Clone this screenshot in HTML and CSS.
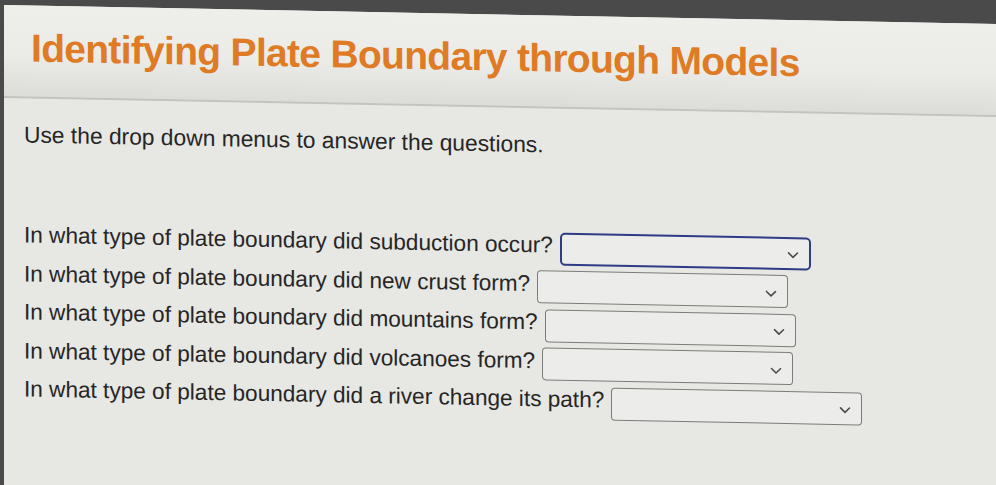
FILE: index.html
```html
<!DOCTYPE html>
<html lang="en">
<head>
<meta charset="utf-8">
<title>Identifying Plate Boundary through Models</title>
<link rel="stylesheet" href="styles.css">
</head>
<body>
<div class="sheet">
  <header class="banner">
    <h1 class="title">Identifying Plate Boundary through Models</h1>
  </header>
  <main class="content">
    <p class="lead">Use the drop down menus to answer the questions.</p>
    <ul class="questions">
      <li class="question">
        <span class="prompt">In what type of plate boundary did subduction occur?</span>
        <div class="dropdown is-focused" tabindex="0">
          <svg class="chevron" viewBox="0 0 12 8" aria-hidden="true"><path d="M1.5 1.8 6 6.2 10.5 1.8"/></svg>
        </div>
      </li>
      <li class="question">
        <span class="prompt">In what type of plate boundary did new crust form?</span>
        <div class="dropdown" tabindex="0">
          <svg class="chevron" viewBox="0 0 12 8" aria-hidden="true"><path d="M1.5 1.8 6 6.2 10.5 1.8"/></svg>
        </div>
      </li>
      <li class="question">
        <span class="prompt">In what type of plate boundary did mountains form?</span>
        <div class="dropdown" tabindex="0">
          <svg class="chevron" viewBox="0 0 12 8" aria-hidden="true"><path d="M1.5 1.8 6 6.2 10.5 1.8"/></svg>
        </div>
      </li>
      <li class="question">
        <span class="prompt">In what type of plate boundary did volcanoes form?</span>
        <div class="dropdown" tabindex="0">
          <svg class="chevron" viewBox="0 0 12 8" aria-hidden="true"><path d="M1.5 1.8 6 6.2 10.5 1.8"/></svg>
        </div>
      </li>
      <li class="question">
        <span class="prompt">In what type of plate boundary did a river change its path?</span>
        <div class="dropdown" tabindex="0">
          <svg class="chevron" viewBox="0 0 12 8" aria-hidden="true"><path d="M1.5 1.8 6 6.2 10.5 1.8"/></svg>
        </div>
      </li>
    </ul>
  </main>
</div>
</body>
</html>
```

FILE: styles.css
```css
html, body {
  margin: 0;
  padding: 0;
  overflow: hidden;
}

/* dark bezel along the top and left edge, page colour underneath */
body {
  height: 485px;
  background:
    linear-gradient(to right, #4a4a4a 0 4px, transparent 4px),
    linear-gradient(to bottom, #4a4a4a 0 24px, #e7e7e3 24px);
  font-family: "Liberation Sans", Arial, sans-serif;
  color: #262626;
}

/* the screen is seen slightly from an angle */
.sheet {
  margin: 5px 0 0 4px;
  height: 461px;
  background: #e7e7e3;
  transform: skewY(1.1deg);
  transform-origin: 0 0;
}

.banner {
  height: 93px;
  box-sizing: border-box;
  padding: 20px 0 0 27px;
  background: linear-gradient(#eeeeeb 0%, #ebebe8 55%, #dcdcd8 100%);
  border-bottom: 2px solid #c4c4bf;
}

.title {
  margin: 0;
  font-size: 39px;
  line-height: 45px;
  font-weight: 700;
  color: #df7b25;
  letter-spacing: -0.7px;
}

.content {
  padding: 23px 0 0 20px;
}

.lead {
  margin: 0;
  font-size: 22.8px;
  line-height: 26px;
}

.questions {
  list-style: none;
  margin: 72px 0 0;
  padding: 0;
  display: flex;
  flex-direction: column;
}

.question {
  height: 38.5px;
  display: flex;
  align-items: center;
  gap: 7px;
}

.prompt {
  font-size: 22.6px;
  line-height: 26px;
  padding-bottom: 6px;
  white-space: nowrap;
}

.dropdown {
  width: 251px;
  height: 33px;
  box-sizing: border-box;
  border: 1.5px solid #7c7c7a;
  border-radius: 4px;
  background: #ececea;
  display: flex;
  align-items: center;
  justify-content: flex-end;
  padding-right: 10px;
  outline: none;
}

.dropdown.is-focused {
  border: 2px solid #2e3b86;
  border-radius: 5px;
}

.chevron {
  width: 12px;
  height: 8px;
  margin-top: 4px;
  fill: none;
  stroke: #4d4d4d;
  stroke-width: 1.6;
  stroke-linecap: round;
  stroke-linejoin: round;
}
```
